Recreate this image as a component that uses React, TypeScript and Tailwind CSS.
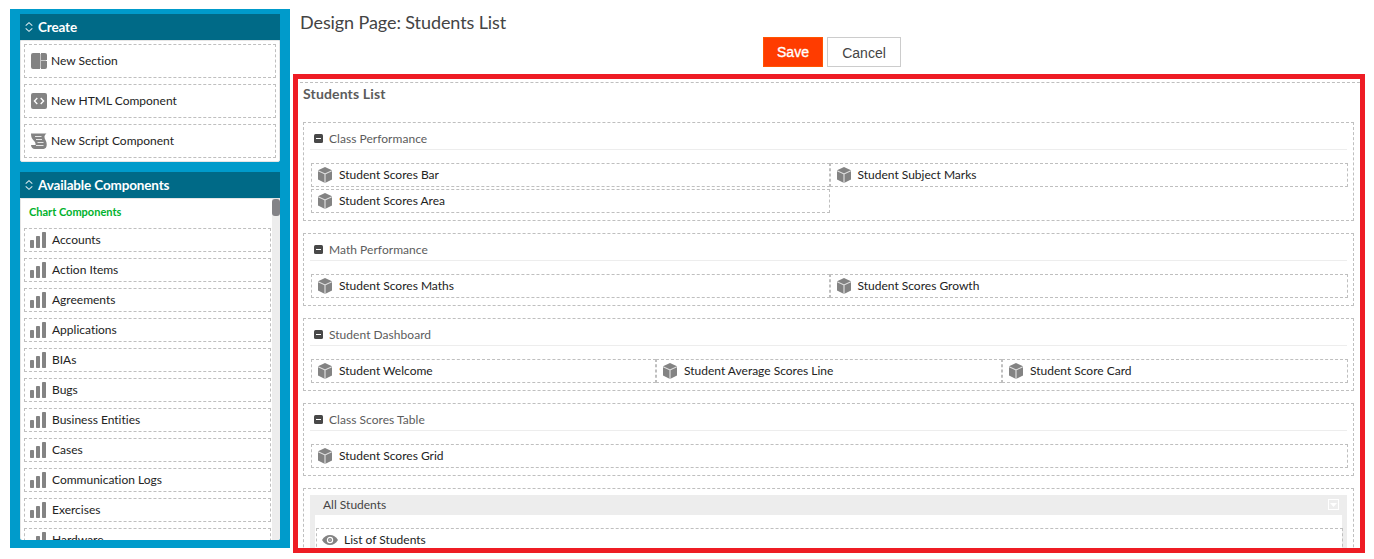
import type { ReactNode } from "react";

const chartComponents = [
  "Accounts",
  "Action Items",
  "Agreements",
  "Applications",
  "BIAs",
  "Bugs",
  "Business Entities",
  "Cases",
  "Communication Logs",
  "Exercises",
  "Hardware",
];

const sections = [
  { title: "Class Performance", columns: "grid-cols-2", items: ["Student Scores Bar", "Student Subject Marks", "Student Scores Area"] },
  { title: "Math Performance", columns: "grid-cols-2", items: ["Student Scores Maths", "Student Scores Growth"] },
  { title: "Student Dashboard", columns: "grid-cols-[345px_346px_346px]", items: ["Student Welcome", "Student Average Scores Line", "Student Score Card"] },
  { title: "Class Scores Table", columns: "grid-cols-1", items: ["Student Scores Grid"] },
];

function SectionIcon() {
  return (
    <svg width="16" height="16" viewBox="0 0 16 16" fill="#838383">
      <rect x="1" y="1" width="14" height="14" fill="#c8c8c8" />
      <path d="M2 0h7v16H2a2 2 0 0 1-2-2V2a2 2 0 0 1 2-2zM10 0h4a2 2 0 0 1 2 2v5h-6zM10 8h6v6a2 2 0 0 1-2 2h-4z" />
    </svg>
  );
}

function HtmlIcon() {
  return (
    <svg width="16" height="16" viewBox="0 0 16 16" fill="none">
      <rect width="16" height="16" rx="2" fill="#838383" />
      <path d="M6.300 5L3.400 8l2.900 3M9.700 5l2.900 3-2.900 3" stroke="#fff" strokeWidth="1.300" />
    </svg>
  );
}

function ScriptIcon() {
  return (
    <svg width="16" height="16" viewBox="0 0 16 16" fill="none">
      <path d="M0 .5H15.500C13 2.500 13 4.500 14.500 7C16.800 11 15.800 16 12.500 16H4C1.500 16 0 14 0 12H4.500C5 10 3.500 8.300 1.800 6.500C.5 5 0 3 0 .5z" fill="#838383" />
      <path d="M4 3.500h6.500M5 6.500h6M6.500 9.500h6M5 12.500h7.500" stroke="#e6e6e6" strokeWidth="1" />
    </svg>
  );
}

function BarsIcon() {
  return (
    <svg width="16" height="16" viewBox="0 0 16 16" fill="#838383">
      <rect x="0" y="8" width="4" height="8" rx=".8" />
      <rect x="6" y="4" width="4" height="12" rx=".8" />
      <rect x="12" y="0" width="4" height="16" rx=".8" />
    </svg>
  );
}

function CubeIcon() {
  return (
    <svg width="14" height="16" viewBox="0 0 14 16">
      <path d="M7 0l7 3.200v9.200L7 16l-7-3.600V3.200z" fill="#838383" />
      <path d="M0 3.700l7 3.300 7-3.300M7 7v9" fill="none" stroke="#e4e4e4" strokeWidth="1.100" />
    </svg>
  );
}

function EyeIcon() {
  return (
    <svg width="16" height="10" viewBox="0 0 16 10">
      <path d="M0 5C2 1.700 4.800 0 8 0s6 1.700 8 5c-2 3.300-4.800 5-8 5S2 8.300 0 5z" fill="#838383" />
      <circle cx="8" cy="5" r="2.600" fill="#838383" stroke="#fff" strokeWidth="1.200" />
      <circle cx="8" cy="5" r=".8" fill="#d5d5d5" />
    </svg>
  );
}

function CollapseIcon() {
  return (
    <svg width="9" height="9" viewBox="0 0 9 9">
      <rect width="9" height="9" rx="1.500" fill="#484848" />
      <path d="M2 4.500h5" stroke="#fff" strokeWidth="1" />
    </svg>
  );
}

function PanelHeader({ title }: { title: string }) {
  return (
    <header className="flex h-[26px] shrink-0 items-center gap-[5px] bg-[#006a87] pl-[5px] text-[13.5px] font-bold text-white">
      <svg width="8" height="10" viewBox="0 0 8 10" fill="none" stroke="#d5e6eb" strokeWidth="1.100">
        <path d="M.7 3.700L4 .7l3.300 3M.7 6.300L4 9.300l3.300-3" />
      </svg>
      <h2 className="leading-[26px] tracking-[-0.15px]">{title}</h2>
    </header>
  );
}

function CreateItem({ icon, label }: { icon: ReactNode; label: string }) {
  return (
    <li className="flex h-[34px] items-center gap-1 border border-dashed border-[#bfbfbf] pl-1.5">
      {icon}
      <span>{label}</span>
    </li>
  );
}

function Sidebar() {
  return (
    <aside className="ml-[10px] mt-[9px] flex h-[539px] w-[280px] shrink-0 flex-col gap-[10px] bg-[#009bcb] px-[10px] pb-2 pt-[5px]">
      <section>
        <PanelHeader title="Create" />
        <ul className="flex h-[122px] flex-col gap-[6px] rounded-b-[2px] border border-[#e5e5e5] bg-white p-[3px]">
          <CreateItem icon={<SectionIcon />} label="New Section" />
          <CreateItem icon={<HtmlIcon />} label="New HTML Component" />
          <CreateItem icon={<ScriptIcon />} label="New Script Component" />
        </ul>
      </section>
      <section className="flex min-h-0 flex-1 flex-col">
        <PanelHeader title="Available Components" />
        <div className="flex min-h-0 flex-1 overflow-hidden rounded-b-[2px] border-l border-t border-[#e5e5e5] bg-white">
          <div className="w-[251px] overflow-hidden pl-[3px]">
            <h3 className="h-[29px] pl-[5px] text-[11px] font-bold leading-[26px] text-[#00b22d]">Chart Components</h3>
            <ul className="flex w-[247px] flex-col gap-[6px]">
              {chartComponents.map((name) => (
                <li key={name} className="flex h-6 shrink-0 items-center gap-[6px] border border-dashed border-[#bfbfbf] pl-[5px]">
                  <BarsIcon />
                  <span>{name}</span>
                </li>
              ))}
            </ul>
          </div>
          <div className="w-2 bg-[#ededed]">
            <div className="h-[17px] rounded-[3px] bg-[#838387]" />
          </div>
        </div>
      </section>
    </aside>
  );
}

export default function App() {
  return (
    <div className="flex h-[559px] w-[1374px] overflow-hidden bg-white font-['Lato','Liberation_Sans',sans-serif] text-[12px] leading-[18px] text-[#222] [font-variant-ligatures:none]">
      <Sidebar />
      <main className="ml-[3px] flex w-[1072px] flex-col">
        <h1 className="h-[37px] pl-[7px] pt-[9px] text-[18px] leading-[26px] tracking-[-0.09px] text-[#444]">Design Page: Students List</h1>
        <div className="flex h-[37px] gap-1 pl-[470px] font-['Liberation_Sans',Arial,sans-serif] text-[14px]">
          <button className="h-[30px] w-[60px] border border-[#ff5500] bg-[#ff3c00] text-white [-webkit-text-stroke:0.35px_#fff]">Save</button>
          <button className="h-[30px] w-[74px] border border-[#ccc] bg-white pt-0.5 text-[#444]">Cancel</button>
        </div>
        <div className="h-[479px] overflow-hidden border-[5px] border-[#ee1c24]">
          <div className="ml-0.5 mt-[3px] border-t border-dashed border-[#bfbfbf]">
            <h2 className="h-[39px] pl-[3px] text-[14px] font-bold leading-[21px] tracking-[0.15px] text-[#5c5c5c]">Students List</h2>
            <div className="ml-[3px] flex w-[1051px] flex-col gap-3">
              {sections.map((section) => (
                <section key={section.title} className="border border-dashed border-[#bfbfbf] px-1.5 pb-[7px]">
                  <header className="flex h-[27px] items-center gap-[6px] border-b border-[#ededed] pl-1 pt-[5px] text-[#5c5c5c]">
                    <CollapseIcon />
                    <h3 className="tracking-[0.04px]">{section.title}</h3>
                  </header>
                  <div className={"ml-px mt-[13px] grid w-[1037px] gap-y-[2px] " + section.columns}>
                    {section.items.map((item) => (
                      <div key={item} className="flex h-6 items-center gap-[7px] border border-dashed border-[#bfbfbf] pl-1.5">
                        <CubeIcon />
                        <span>{item}</span>
                      </div>
                    ))}
                  </div>
                </section>
              ))}
              <section className="h-[90px] border border-dashed border-[#bfbfbf] px-1.5 pt-1.5">
                <div className="h-[80px] w-[1037px] border-x-[5px] border-[#ededed]">
                  <header className="flex h-5 items-center justify-between bg-[#ededed] pl-2 pr-[3px] text-[#444]">
                    <h3 className="-mt-px">All Students</h3>
                    <svg className="-mt-0.5" width="11" height="11" viewBox="0 0 11 11">
                      <rect x=".5" y=".5" width="10" height="10" fill="none" stroke="#fff" />
                      <path d="M2 4h7L5.500 8z" fill="#fff" />
                    </svg>
                  </header>
                  <div className="ml-px mt-[13px] flex h-6 w-[1027px] items-center gap-[6px] border border-dashed border-[#bfbfbf] pl-[5px]">
                    <EyeIcon />
                    <span>List of Students</span>
                  </div>
                </div>
              </section>
            </div>
          </div>
        </div>
      </main>
    </div>
  );
}
